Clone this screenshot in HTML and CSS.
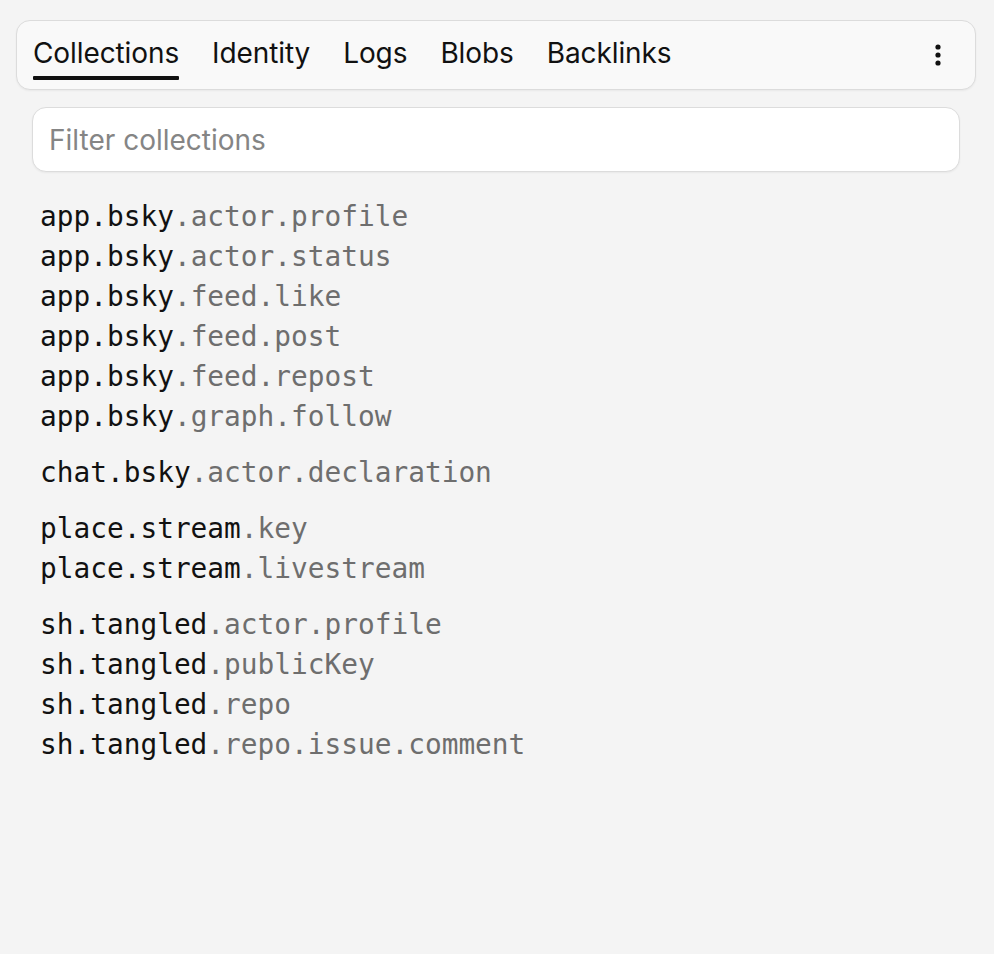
FILE: index.html
```html
<!DOCTYPE html>
<html lang="en">
<head>
<meta charset="utf-8">
<title>Collections</title>
<link rel="stylesheet" href="styles.css">
</head>
<body>
<div class="page">
  <nav class="tabbar">
    <div class="tabs">
      <a class="tab active">Collections</a>
      <a class="tab">Identity</a>
      <a class="tab">Logs</a>
      <a class="tab">Blobs</a>
      <a class="tab">Backlinks</a>
    </div>
    <button class="more" aria-label="More">
      <svg width="6" height="22" viewBox="0 0 6 22"><circle cx="3" cy="3" r="2.6" fill="#111"/><circle cx="3" cy="11" r="2.6" fill="#111"/><circle cx="3" cy="19" r="2.6" fill="#111"/></svg>
    </button>
  </nav>
  <div class="content">
    <input class="filter" type="text" placeholder="Filter collections">
    <div class="groups">
      <ul class="group">
        <li><span class="auth">app.bsky</span><span class="rest">.actor.profile</span></li>
        <li><span class="auth">app.bsky</span><span class="rest">.actor.status</span></li>
        <li><span class="auth">app.bsky</span><span class="rest">.feed.like</span></li>
        <li><span class="auth">app.bsky</span><span class="rest">.feed.post</span></li>
        <li><span class="auth">app.bsky</span><span class="rest">.feed.repost</span></li>
        <li><span class="auth">app.bsky</span><span class="rest">.graph.follow</span></li>
      </ul>
      <ul class="group">
        <li><span class="auth">chat.bsky</span><span class="rest">.actor.declaration</span></li>
      </ul>
      <ul class="group">
        <li><span class="auth">place.stream</span><span class="rest">.key</span></li>
        <li><span class="auth">place.stream</span><span class="rest">.livestream</span></li>
      </ul>
      <ul class="group">
        <li><span class="auth">sh.tangled</span><span class="rest">.actor.profile</span></li>
        <li><span class="auth">sh.tangled</span><span class="rest">.publicKey</span></li>
        <li><span class="auth">sh.tangled</span><span class="rest">.repo</span></li>
        <li><span class="auth">sh.tangled</span><span class="rest">.repo.issue.comment</span></li>
      </ul>
    </div>
  </div>
</div>
</body>
</html>
```
FILE: styles.css
```css
html, body {
  margin: 0;
  padding: 0;
  background: #f4f4f4;
}
body {
  font-family: Inter, "Noto Sans", sans-serif;
  color: #111;
}
.page {
  padding: 20px 18px 20px 16px;
}
.tabbar {
  display: flex;
  align-items: center;
  justify-content: space-between;
  height: 68px;
  padding: 0 16px;
  background: #f9f9f9;
  border: 1px solid #dcdcdc;
  border-radius: 14px;
  box-shadow: 0 1px 2px rgba(0,0,0,0.05);
}
.tabs {
  display: flex;
  gap: 33px;
  align-items: flex-start;
  align-self: stretch;
  padding-top: 15px;
}
.tab {
  display: block;
  font-size: 28px;
  line-height: 34px;
  color: #111;
  letter-spacing: -0.1px;
  position: relative;
  padding-bottom: 10px;
  cursor: pointer;
}
.tab.active::after {
  content: "";
  position: absolute;
  left: 0;
  right: 0;
  bottom: 0;
  height: 4px;
  border-radius: 1px;
  background: #111;
}
.more {
  border: 0;
  background: transparent;
  padding: 0;
  margin-right: 18px;
  display: flex;
  align-items: center;
  height: 24px;
}
.content {
  padding: 17px 16px 0;
}
.filter {
  display: block;
  box-sizing: border-box;
  width: 100%;
  height: 65px;
  padding: 0 16px;
  font-family: Inter, "Noto Sans", sans-serif;
  font-size: 28px;
  color: #111;
  background: #fff;
  border: 1px solid #dcdcdc;
  border-radius: 14px;
  box-shadow: 0 1px 2px rgba(0,0,0,0.05);
  outline: none;
}
.filter::placeholder {
  color: #858585;
}
.groups {
  padding: 25px 8px 0;
  display: flex;
  flex-direction: column;
  gap: 16px;
}
.group {
  list-style: none;
  margin: 0;
  padding: 0;
  font-family: "DejaVu Sans Mono", "Liberation Mono", monospace;
  font-size: 27.8px;
  line-height: 40px;
}
.auth {
  color: #111;
}
.rest {
  color: #6e6e6e;
}
```
